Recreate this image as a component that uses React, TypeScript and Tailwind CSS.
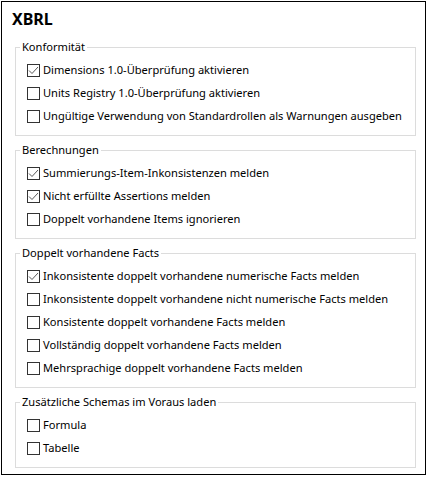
import React from "react";

type Item = { label: string; checked: boolean };
type Group = { title: string; items: Item[] };

const groups: Group[] = [
  {
    title: "Konformität",
    items: [
      { label: "Dimensions 1.0-Überprüfung aktivieren", checked: true },
      { label: "Units Registry 1.0-Überprüfung aktivieren", checked: false },
      { label: "Ungültige Verwendung von Standardrollen als Warnungen ausgeben", checked: false },
    ],
  },
  {
    title: "Berechnungen",
    items: [
      { label: "Summierungs-Item-Inkonsistenzen melden", checked: true },
      { label: "Nicht erfüllte Assertions melden", checked: true },
      { label: "Doppelt vorhandene Items ignorieren", checked: false },
    ],
  },
  {
    title: "Doppelt vorhandene Facts",
    items: [
      { label: "Inkonsistente doppelt vorhandene numerische Facts melden", checked: true },
      { label: "Inkonsistente doppelt vorhandene nicht numerische Facts melden", checked: false },
      { label: "Konsistente doppelt vorhandene Facts melden", checked: false },
      { label: "Vollständig doppelt vorhandene Facts melden", checked: false },
      { label: "Mehrsprachige doppelt vorhandene Facts melden", checked: false },
    ],
  },
  {
    title: "Zusätzliche Schemas im Voraus laden",
    items: [
      { label: "Formula", checked: false },
      { label: "Tabelle", checked: false },
    ],
  },
];

function Box({ checked }: { checked: boolean }) {
  return (
    <span className="flex h-[13px] w-[13px] shrink-0 items-center justify-center border border-[#333333] bg-white">
      {checked && (
        <svg width="11" height="11" viewBox="0 0 11 11">
          <polyline points="1,5.5 4,8.5 10,2" fill="none" stroke="#5a5a5a" strokeWidth="1" />
        </svg>
      )}
    </span>
  );
}

export default function App() {
  return (
    <div
      className="ml-px mt-px h-[474px] w-[425px] border border-black bg-white text-black"
      style={{ fontFamily: '"Noto Sans", "Segoe UI", sans-serif' }}
    >
      <div className="pl-[10px] pt-[7px] text-[16px] font-bold leading-[20px]">XBRL</div>
      <div className="ml-[13px] mt-[10px] flex w-[401px] flex-col gap-[6px]">
        {groups.map((g) => (
          <fieldset key={g.title} className="border border-[#dcdcdc] px-[4px] pb-[7px]">
            <legend className="px-[2px] text-[11.1px] leading-[16px]">{g.title}</legend>
            <div className="mt-[4px] flex flex-col">
              {g.items.map((it) => (
                <label key={it.label} className="ml-[7px] flex h-[23px] items-center gap-[3px] text-[11.1px]">
                  <Box checked={it.checked} />
                  <span className="whitespace-nowrap">{it.label}</span>
                </label>
              ))}
            </div>
          </fieldset>
        ))}
      </div>
    </div>
  );
}
